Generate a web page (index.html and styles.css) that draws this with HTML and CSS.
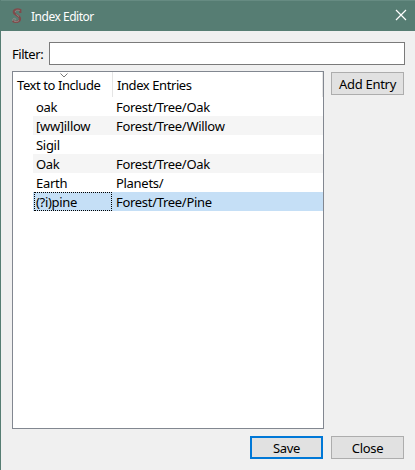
FILE: index.html
```html
<!DOCTYPE html>
<html lang="en">
<head>
<meta charset="utf-8">
<title>Index Editor</title>
<link rel="stylesheet" href="styles.css">
</head>
<body>
<div class="window">
  <header class="titlebar">
    <svg class="logo" width="12" height="16" viewBox="0 0 12 16" fill="none">
      <path d="M9.3 5V2C7 .8 2.8 1.2 2.8 4.1C2.8 7.3 9 7.1 9 10.7C9 14.2 4 14.8 1.7 12.8" stroke="#804a4b" stroke-width="2.2"/>
      <path d="M8.8 2.5C5.8 1.7 4 2.6 4.2 4.2M5.4 6.4L8 8.6M2 13C1 10.6 3.2 9.8 4.4 10.6C5.4 11.6 4.2 12.4 3.4 11.9M8 12.4C6.5 14 4.3 13.8 3 13" stroke="#988986" stroke-width=".9"/>
    </svg>
    <span class="title">Index Editor</span>
    <svg class="close" width="12" height="12" viewBox="0 0 12 12"><path d="M1 1L11 11M11 1L1 11" stroke="#fff" stroke-width="1.2"/></svg>
  </header>
  <main class="content">
    <label class="filter"><span class="filter-label">Filter:</span><input class="filter-input" type="text"></label>
    <div class="middle">
      <div class="list">
        <div class="head">
          <div class="head-cell first">Text to Include<svg class="sort" width="8" height="5" viewBox="0 0 8 5" fill="none"><path d="M.5 .5L4 4L7.5 .5" stroke="#777"/></svg></div>
          <div class="head-cell second">Index Entries</div>
        </div>
        <div class="row"><span class="key">oak</span><span class="value">Forest/Tree/Oak</span></div>
        <div class="row alt"><span class="key">[ww]illow</span><span class="value">Forest/Tree/Willow</span></div>
        <div class="row"><span class="key">Sigil</span><span class="value"></span></div>
        <div class="row alt"><span class="key">Oak</span><span class="value">Forest/Tree/Oak</span></div>
        <div class="row"><span class="key">Earth</span><span class="value">Planets/</span></div>
        <div class="row selected"><span class="key">(?i)pine</span><span class="value">Forest/Tree/Pine</span></div>
      </div>
      <button class="button add">Add Entry</button>
    </div>
    <footer class="actions"><button class="button save">Save</button><button class="button">Close</button></footer>
  </main>
</div>
</body>
</html>
```
FILE: styles.css
```css
* { box-sizing: border-box; }
body { margin: 0; font: 13px/19px "Noto Sans", sans-serif; letter-spacing: -0.3px; color: #000; }
.window { width: 415px; height: 470px; background: #f0f0f0; border-left: 1px solid #567d73; overflow: hidden; }
.titlebar { height: 31px; display: flex; align-items: center; background: #567d73; border-top: 1px solid #668b82; padding: 0 8px 0 10px; color: #fff; }
.logo { margin-right: 7px; }
.title { font-size: 12px; flex: 1; letter-spacing: -0.48px; padding-left: 1px; }
.close { margin-bottom: 2px; }
.content { padding: 11px 10px 0 11px; }
.filter { display: flex; height: 23px; align-items: center; }
.filter-label { width: 37px; padding-top: 2px; white-space: nowrap; letter-spacing: -0.45px; }
.filter-input { flex: 1; height: 23px; min-width: 0; border: 1px solid #7a7a7a; background: #fff; padding: 0 4px; outline: 0; }
.middle { display: flex; align-items: flex-start; gap: 7px; margin-top: 6px; }
.list { width: 312px; height: 358px; border: 1px solid #828790; background: #fff; white-space: nowrap; }
.head { display: flex; height: 25px; border-right: 1px solid #e5e5e5; }
.head-cell { position: relative; padding: 4px 0 0 4px; line-height: 19px; letter-spacing: -0.42px; }
.first { width: 100px; border-right: 1px solid #e5e5e5; }
.sort { position: absolute; left: 47px; top: 1px; }
.row { display: flex; height: 19px; margin-left: 20px; }
.alt { background: #f5f5f5; }
.selected { background: #c5dff6; }
.key { width: 80px; padding-left: 3px; line-height: 21px; height: 19px; }
.value { padding-left: 3px; line-height: 21px; height: 19px; }
.selected .key { width: 78px; margin: 0 1px; padding-left: 1px; border: 1px dotted #000; line-height: 19px; }
.button { width: 73px; height: 23px; border: 1px solid #adadad; background: #e1e1e1; padding: 1px 0 0; font: inherit; line-height: 19px; letter-spacing: inherit; color: #000; white-space: nowrap; }
.add { margin-top: 1px; }
.actions { display: flex; justify-content: flex-end; gap: 8px; margin-top: 7px; padding-right: 1px; }
.save { border: 2px solid #0078d7; padding: 1px 0 0; line-height: 18px; }
```
